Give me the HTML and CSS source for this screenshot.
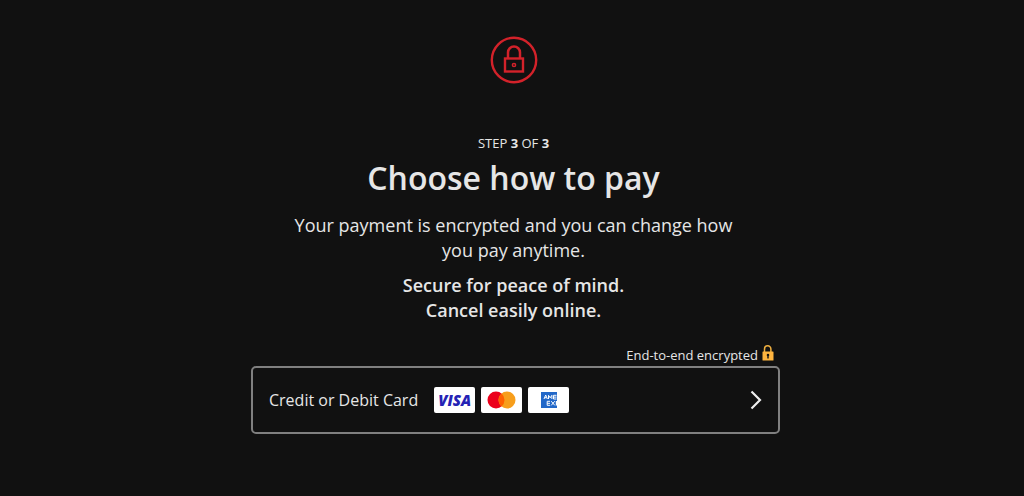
FILE: index.html
```html
<!DOCTYPE html>
<html lang="en">
<head>
    <meta charset="UTF-8">
    <meta name="viewport" content="width=device-width, initial-scale=1.0">
    <title>Choose how to pay</title>
    <link rel="stylesheet" href="styles.css">
</head>
<body>
    <main class="payment">
        <header class="intro">
            <svg class="lock-icon" viewBox="0 0 48 48" fill="none" stroke="#d3222a" aria-hidden="true">
                <circle cx="24" cy="24" r="22.2" stroke-width="2.4"/>
                <rect x="15" y="22.5" width="18" height="13" stroke-width="2.4"/>
                <path d="M18 22v-5.5a6 6 0 0 1 12 0V22" stroke-width="2.5"/>
                <circle cx="24" cy="29" r="1.6" stroke-width="1.5"/>
            </svg>
            <p class="step">STEP <b>3</b> OF <b>3</b></p>
            <h1>Choose how to pay</h1>
            <p class="description">Your payment is encrypted and you can change how you pay anytime.</p>
            <p class="promise">Secure for peace of mind.<br>Cancel easily online.</p>
        </header>

        <p class="encrypted">
            End-to-end encrypted
            <svg class="small-lock" viewBox="0 0 12 16" aria-hidden="true">
                <path d="M2.5 7V4a3.2 3.2 0 0 1 6.4 0v3" fill="none" stroke="#f0b040" stroke-width="1.5"/>
                <rect x="0.5" y="6.5" width="11" height="9" rx="0.6" fill="#ffb53f"/>
                <path d="M6 8.7a1.3 1.3 0 0 1 .7 2.4v2.3H5.3v-2.3A1.3 1.3 0 0 1 6 8.7z" fill="#111"/>
            </svg>
        </p>

        <button type="button" class="method">
            <span class="method-name">Credit or Debit Card</span>
            <span class="cards">
                <span class="card visa">VISA</span>
                <span class="card">
                    <svg viewBox="0 0 41 26" role="img" aria-label="Mastercard">
                        <circle cx="15" cy="13" r="8.5" fill="#eb001b"/>
                        <circle cx="26" cy="13" r="8.5" fill="#f79e1b"/>
                        <path d="M20.5 6.5a8.5 8.5 0 0 1 0 13a8.5 8.5 0 0 1 0-13z" fill="#ff5f00"/>
                    </svg>
                </span>
                <span class="card">
                    <svg viewBox="0 0 41 26" role="img" aria-label="American Express">
                        <rect x="13" y="5" width="16" height="16" fill="#2268c8"/>
                        <g fill="none" stroke="#fff" stroke-width="1">
                            <path d="M16 12l1.7-4 1.7 4M16.8 10.7h1.8M20.5 12V8.3l1.7 2.5 1.7-2.5V12M28.5 8.3h-3V12h3M25.5 10.1h3"/>
                            <path d="M22 14.3h-2.8v4H22M19.2 16.3H22M23.2 14.2l3.6 4.2M26.8 14.2l-3.6 4.2"/>
                        </g>
                        <path d="M27.8 14H29v4.5h-1.2z" fill="#fff"/>
                    </svg>
                </span>
            </span>
            <svg class="chevron" viewBox="0 0 12 20" fill="none" stroke="#eee" stroke-width="2.2" aria-hidden="true">
                <path d="M1.5 1.5L10 10l-8.5 8.5"/>
            </svg>
        </button>
    </main>
</body>
</html>
```

FILE: styles.css
```css
* {
    box-sizing: border-box;
}
body {
    margin: 0;
    padding: 36px 0 36px 7px;
    background-color: #111;
    color: #e6e6e6;
    font-family: "Segoe UI", "Open Sans", "Noto Sans", sans-serif;
}
h1, p {
    margin: 0;
}
.payment {
    max-width: 529px;
    margin: 0 auto;
}
.intro {
    padding-right: 4px;
    text-align: center;
}
.lock-icon {
    display: block;
    width: 48px;
    height: 48px;
    margin: 0 auto 50px;
}
.step {
    font-size: 13px;
    line-height: 18px;
}
h1 {
    font-size: 32px;
    font-weight: 600;
    line-height: 51px;
}
.description, .promise {
    max-width: 450px;
    margin: 10px auto 0;
    font-size: 18px;
    line-height: 25px;
}
.promise {
    font-weight: 600;
}
.encrypted {
    display: flex;
    justify-content: flex-end;
    align-items: center;
    gap: 4px;
    margin-top: 22px;
    padding-right: 6px;
    font-size: 13px;
    line-height: 20px;
}
.small-lock {
    width: 12px;
    height: 16px;
    margin-bottom: 4px;
}
.method {
    display: flex;
    align-items: center;
    width: 100%;
    height: 68px;
    margin-top: 1px;
    padding: 0 16px;
    border: 2px solid #808080;
    border-radius: 5px;
    background-color: transparent;
    color: inherit;
    font-family: inherit;
    font-size: 16px;
    cursor: pointer;
}
.method:hover {
    border-color: #b3b3b3;
}
.cards {
    display: flex;
    gap: 6px;
    margin-left: 16px;
}
.card {
    display: flex;
    align-items: center;
    justify-content: center;
    width: 41px;
    height: 26px;
    border-radius: 2px;
    background-color: #fff;
}
.visa {
    color: #2423b5;
    font-size: 15px;
    font-style: italic;
    font-weight: 800;
}
.chevron {
    width: 12px;
    height: 20px;
    margin-left: auto;
}
```
